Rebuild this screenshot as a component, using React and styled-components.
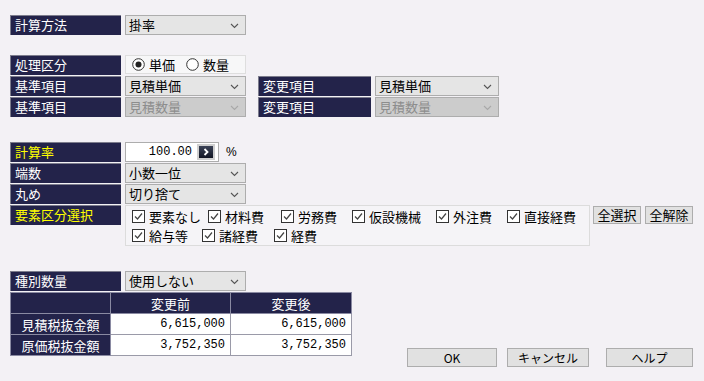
import React from "react";
import styled, { createGlobalStyle } from "styled-components";

const GlobalStyle = createGlobalStyle`
  html, body {
    margin: 0;
    padding: 0;
    background: #f3f1f5;
  }
  body {
    font-family: "Noto Sans CJK JP", "Liberation Sans", sans-serif;
    font-size: 13px;
    color: #000;
  }
`;

const elements = [
  [
    { name: "要素なし", width: 76 },
    { name: "材料費", width: 73 },
    { name: "労務費", width: 71 },
    { name: "仮設機械", width: 84 },
    { name: "外注費", width: 71 },
    { name: "直接経費", width: 76 },
  ],
  [
    { name: "給与等", width: 70 },
    { name: "諸経費", width: 72 },
    { name: "経費", width: 60 },
  ],
];

const amounts = [
  { name: "見積税抜金額", before: "6,615,000", after: "6,615,000" },
  { name: "原価税抜金額", before: "3,752,350", after: "3,752,350" },
];

function Chevron() {
  return (
    <svg width="9" height="6" viewBox="0 0 9 6">
      <path d="M1 1 L4.5 4.5 L8 1" fill="none" stroke="currentColor" strokeWidth="1.1" />
    </svg>
  );
}

function Select({ value, width = 121, disabled }) {
  return (
    <Style.Select $width={width} $disabled={disabled}>
      <span>{value}</span>
      <Style.Arrow $disabled={disabled}>
        <Chevron />
      </Style.Arrow>
    </Style.Select>
  );
}

function Radio({ checked, label }) {
  return (
    <Style.RadioItem>
      <svg width="13" height="13" viewBox="0 0 13 13">
        <circle cx="6.5" cy="6.5" r="5.8" fill="#fff" stroke="#333" strokeWidth="1" />
        {checked && <circle cx="6.5" cy="6.5" r="3" fill="#222" />}
      </svg>
      {label}
    </Style.RadioItem>
  );
}

function Check({ label, width }) {
  return (
    <Style.CheckItem $width={width}>
      <svg width="13" height="13" viewBox="0 0 13 13">
        <rect x="0.5" y="0.5" width="12" height="12" fill="#fff" stroke="#333" />
        <path d="M3 6.5 L5.5 9 L10 3.5" fill="none" stroke="#444" strokeWidth="1.2" />
      </svg>
      {label}
    </Style.CheckItem>
  );
}

export default function App() {
  return (
    <Style.Page>
      <GlobalStyle />
      <Style.Row>
        <Style.Label>計算方法</Style.Label>
        <Select value="掛率" />
      </Style.Row>

      <Style.Row $top={19}>
        <Style.Label>処理区分</Style.Label>
        <Style.RadioGroup>
          <Radio checked label="単価" />
          <Radio label="数量" />
        </Style.RadioGroup>
      </Style.Row>
      <Style.Row>
        <Style.Label>基準項目</Style.Label>
        <Select value="見積単価" />
        <Style.Label $width={113} $left={8}>
          変更項目
        </Style.Label>
        <Select value="見積単価" width={124} />
      </Style.Row>
      <Style.Row>
        <Style.Label>基準項目</Style.Label>
        <Select value="見積数量" disabled />
        <Style.Label $width={113} $left={8}>
          変更項目
        </Style.Label>
        <Select value="見積数量" width={124} disabled />
      </Style.Row>

      <Style.Row $top={24}>
        <Style.Label $accent>計算率</Style.Label>
        <Style.NumberBox>
          <Style.NumberValue>100.00</Style.NumberValue>
          <Style.SpinButton>
            <svg width="8" height="8" viewBox="0 0 8 8">
              <path d="M2.5 1 L5.5 4 L2.5 7" fill="none" stroke="#fff" strokeWidth="1.8" />
            </svg>
          </Style.SpinButton>
        </Style.NumberBox>
        <Style.Unit>%</Style.Unit>
      </Style.Row>
      <Style.Row>
        <Style.Label>端数</Style.Label>
        <Select value="小数一位" />
      </Style.Row>
      <Style.Row>
        <Style.Label>丸め</Style.Label>
        <Select value="切り捨て" />
      </Style.Row>
      <Style.Row $tall>
        <Style.Label $accent>要素区分選択</Style.Label>
        <Style.CheckPanel>
          {elements.map((row, i) => (
            <Style.CheckRow key={i}>
              {row.map(item => (
                <Check key={item.name} label={item.name} width={item.width} />
              ))}
            </Style.CheckRow>
          ))}
        </Style.CheckPanel>
        <Style.SmallButtons>
          <Style.SmallButton>全選択</Style.SmallButton>
          <Style.SmallButton>全解除</Style.SmallButton>
        </Style.SmallButtons>
      </Style.Row>

      <Style.Row $top={24}>
        <Style.Label>種別数量</Style.Label>
        <Select value="使用しない" />
      </Style.Row>

      <Style.Footer>
        <Style.Table>
          <colgroup>
            <col style={{ width: 100 }} />
            <col style={{ width: 120 }} />
            <col style={{ width: 121 }} />
          </colgroup>
          <thead>
            <tr>
              <Style.Head />
              <Style.Head>変更前</Style.Head>
              <Style.Head>変更後</Style.Head>
            </tr>
          </thead>
          <tbody>
            {amounts.map(row => (
              <tr key={row.name}>
                <Style.Head>{row.name}</Style.Head>
                <Style.Amount>{row.before}</Style.Amount>
                <Style.Amount>{row.after}</Style.Amount>
              </tr>
            ))}
          </tbody>
        </Style.Table>
        <Style.ButtonBar>
          <Style.Button $width={90}>OK</Style.Button>
          <Style.Button $width={82}>キャンセル</Style.Button>
          <Style.Button $width={87} $left={7}>
            ヘルプ
          </Style.Button>
        </Style.ButtonBar>
      </Style.Footer>
    </Style.Page>
  );
}

const Style = {
  Page: styled.div`
    width: 704px;
    height: 381px;
    box-sizing: border-box;
    padding: 15px 10px 0 10px;
    display: flex;
    flex-direction: column;
    gap: 1px;
    overflow: hidden;
  `,
  Row: styled.div`
    display: flex;
    align-items: flex-start;
    gap: 4px;
    height: ${p => (p.$tall ? "41px" : "20px")};
    margin-top: ${p => p.$top || 0}px;
  `,
  Label: styled.div`
    width: ${p => p.$width || 111}px;
    height: 20px;
    margin-left: ${p => p.$left || 0}px;
    box-sizing: border-box;
    background: #23234a;
    border-top: 1px solid #7c7c8c;
    border-left: 1px solid #7c7c8c;
    color: ${p => (p.$accent ? "#ffff00" : "#ffffff")};
    padding-left: 4px;
    line-height: 18px;
    white-space: nowrap;
    flex-shrink: 0;
  `,
  Select: styled.div`
    width: ${p => p.$width}px;
    height: 20px;
    box-sizing: border-box;
    border: 1px solid #adadad;
    background: ${p => (p.$disabled ? "#cccccc" : "#e5e5e5")};
    color: ${p => (p.$disabled ? "#8d8d8d" : "#000")};
    display: flex;
    align-items: center;
    justify-content: space-between;
    padding: 0 6px 0 3px;
    line-height: 18px;
    flex-shrink: 0;
  `,
  Arrow: styled.span`
    display: flex;
    color: ${p => (p.$disabled ? "#a8a8a8" : "#555")};
    margin-top: 1px;
  `,
  RadioGroup: styled.div`
    width: 121px;
    height: 19px;
    box-sizing: border-box;
    border: 1px solid #dedede;
    background: #f7f7f8;
    display: flex;
    align-items: center;
    gap: 11px;
    padding-left: 6px;
  `,
  RadioItem: styled.label`
    display: flex;
    align-items: center;
    gap: 4px;
    line-height: 17px;
  `,
  NumberBox: styled.div`
    width: 94px;
    height: 20px;
    box-sizing: border-box;
    border: 1px solid #adadad;
    background: #fff;
    display: flex;
    align-items: center;
    justify-content: flex-end;
    gap: 5px;
    padding-right: 3px;
  `,
  NumberValue: styled.span`
    font-family: "Liberation Mono", monospace;
    font-size: 12px;
  `,
  SpinButton: styled.span`
    width: 14px;
    height: 12px;
    border: 2px solid #cfcfcf;
    background: linear-gradient(#3a4256, #121624);
    display: flex;
    align-items: center;
    justify-content: center;
  `,
  Unit: styled.span`
    margin-left: 3px;
    line-height: 20px;
    font-family: "Liberation Sans", sans-serif;
    font-size: 12px;
  `,
  CheckPanel: styled.div`
    width: 465px;
    height: 41px;
    box-sizing: border-box;
    border: 1px solid #dcdcdc;
    background: #f5f4f7;
    padding: 1px 0 0 6px;
    display: flex;
    flex-direction: column;
  `,
  CheckRow: styled.div`
    display: flex;
    height: 22px;
    align-items: center;
  `,
  CheckItem: styled.label`
    width: ${p => p.$width}px;
    flex-shrink: 0;
    display: flex;
    align-items: center;
    gap: 4px;
    white-space: nowrap;
  `,
  SmallButtons: styled.div`
    display: flex;
    gap: 4px;
    margin-left: -1px;
    padding-top: 1px;
  `,
  SmallButton: styled.button`
    width: 48px;
    height: 18px;
    box-sizing: border-box;
    border: 1px solid #adadad;
    background: #e1e1e1;
    font: inherit;
    padding: 0;
    line-height: 16px;
    color: #000;
  `,
  Footer: styled.div`
    display: flex;
    justify-content: space-between;
    align-items: flex-start;
  `,
  Table: styled.table`
    border-collapse: collapse;
    width: 341px;
    table-layout: fixed;
    border: 1px solid #6d6d78;
  `,
  Head: styled.td`
    height: 20px;
    padding: 0;
    background: #23234a;
    color: #fff;
    text-align: center;
    border: 1px solid #8a8aa2;
    line-height: 19px;
  `,
  Amount: styled.td`
    height: 20px;
    padding: 0 5px 0 0;
    background: #fff;
    text-align: right;
    border: 1px solid #9a9aa8;
    font-family: "Liberation Mono", monospace;
    font-size: 12px;
    line-height: 19px;
  `,
  ButtonBar: styled.div`
    display: flex;
    gap: 10px;
    margin-top: 56px;
    margin-right: 1px;
  `,
  Button: styled.button`
    width: ${p => p.$width}px;
    margin-left: ${p => p.$left || 0}px;
    height: 19px;
    box-sizing: border-box;
    border: 1px solid #adadad;
    background: #e1e1e1;
    font: inherit;
    font-size: 12px;
    padding: 0;
    line-height: 17px;
    color: #000;
  `,
};
